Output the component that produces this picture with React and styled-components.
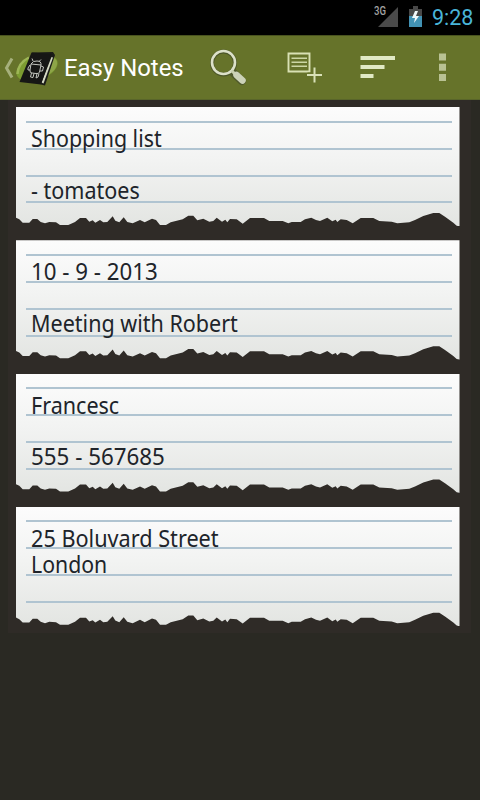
import React from 'react';
import styled, { createGlobalStyle } from 'styled-components';

const notes = [
  { id: 1, lines: [['Shopping list', 131], [], ['- tomatoes', 109]] },
  { id: 2, lines: [['10 - 9 - 2013', 127], [], ['Meeting with Robert', 207]] },
  { id: 3, lines: [['Francesc', 88], [], ['555 - 567685', 134]] },
  { id: 4, lines: [['25 Boluvard Street', 188], ['London', 76]] },
];

// torn bottom edge, left to right, in thirds of a pixel
const tear = [
  [0, 332], [10, 337], [20, 347], [40, 347], [50, 336], [64, 336], [74, 345],
  [87, 349], [100, 345], [120, 346], [132, 354], [157, 354], [177, 345],
  [192, 333], [210, 333], [220, 344], [230, 340], [238, 347], [252, 339],
  [262, 346], [274, 345], [290, 328], [298, 341], [310, 346], [323, 331],
  [334, 345], [350, 349], [372, 339], [386, 346], [408, 335], [420, 339],
  [432, 354], [450, 354], [464, 346], [500, 337], [517, 326], [532, 326],
  [544, 340], [562, 335], [580, 344], [592, 342], [602, 332], [618, 344],
  [628, 338], [634, 346], [642, 336], [662, 337], [680, 350], [702, 333],
  [744, 333], [760, 342], [800, 342], [817, 349], [827, 345], [854, 345],
  [867, 337], [886, 332], [900, 339], [912, 342], [934, 332], [949, 343],
  [959, 338], [964, 345], [974, 337], [992, 339], [1010, 349], [1034, 333],
  [1072, 333], [1090, 342], [1127, 344], [1144, 349], [1180, 346],
  [1197, 339], [1222, 327], [1252, 318], [1270, 318], [1287, 329],
  [1312, 347], [1322, 356], [1330, 358],
];

const tearPath = [
  '0 0',
  ...tear.map(([x, y]) => `${(x / 3).toFixed(1)}px ${(y / 3).toFixed(1)}px`),
  '100% 100%',
  '100% 0',
].join(', ');

function FittedText({ width, children }) {
  const ref = React.useRef(null);
  const [scale, setScale] = React.useState(1);

  React.useLayoutEffect(() => {
    setScale(width / ref.current.offsetWidth);
  }, [width, children]);

  return (
    <Fitted ref={ref} style={{ transform: `scaleX(${scale})` }}>
      {children}
    </Fitted>
  );
}

function StatusIcons() {
  return (
    <svg width="52" height="34" viewBox="0 0 52 34">
      <path d="M25 7V27H5Z" fill="#4a4a4a" />
      <path d="M40 6h5v3h4v7H36V9h4z" fill="#484848" />
      <path d="M36 16h13v11H36z" fill="#4292b4" />
      <path d="M42 11l-3 7h3l-1 5 5-7h-3l2-5z" fill="#f2f8fa" />
    </svg>
  );
}

function AppLogo() {
  return (
    <svg width="60" height="64" viewBox="0 1 60 64">
      <path d="M12 23.500L6.500 33L12 42.500" fill="none" stroke="#a6b07c" strokeWidth="3" />
      <ellipse cx="37" cy="33" rx="21.500" ry="12" transform="rotate(-20 37 33)" fill="#7c9c31" />
      <path d="M17.500 39Q18 28 29 22.500" fill="none" stroke="#9db656" strokeWidth="2.500" />
      <path d="M50 23q8 0 7 6-1 6-8 10z" fill="#8ea548" />
      <path d="M32 17.500L53 17 55 20 45 50.500 41 49.500z" fill="#1b1c18" />
      <path d="M51.500 22L53 22.500 43.500 48.500 41.500 47.500z" fill="#d5d9c5" />
      <path d="M31.500 17.500L51.500 19 41 49.500 19.500 47z" fill="#161615" />
      <g fill="none" stroke="#c3c5bf" strokeWidth="1" strokeLinejoin="round">
        <path d="M31 29Q33 25.500 37 26Q41.500 26 41 30L39.500 37Q39 39 36 38.500L32 38Q29.500 38 30 35z" />
        <path d="M31 29L41 30M33 26L32 23.500M39 26.500L41 24.500M30 30L28 33 28 35 30 35M41 31L43.500 32 42.500 36 40 36M31.500 38L30.500 42 33 42.500 34 38.500M37 38.500L36 43 38 42 39 38.500" />
      </g>
    </svg>
  );
}

function SearchIcon() {
  return (
    <svg width="40" height="40" viewBox="0 0 40 40">
      <circle cx="15.500" cy="15" r="11.500" fill="none" stroke="#4b5528" strokeWidth="4" />
      <path d="M25 24.500L34 33" stroke="#4f592c" strokeWidth="8" strokeLinecap="round" />
      <circle cx="15.500" cy="14.500" r="11.500" fill="none" stroke="#dce1c8" strokeWidth="2.600" />
      <path d="M23.500 22.500L27 26" stroke="#c9d0b0" strokeWidth="3" />
      <path d="M28.500 27L34.500 32.500" stroke="#ccd2b8" strokeWidth="6.500" strokeLinecap="round" />
    </svg>
  );
}

function AddNoteIcon() {
  return (
    <svg width="36" height="34" viewBox="0 1 36 34">
      <path d="M1.500 3.500h21v18h-21z" fill="none" stroke="#d9e1b4" strokeWidth="1.900" />
      <path d="M4.500 8.200h15.500M4.500 12.200h15.500M4.500 16.200h15.500" stroke="#ccd6a4" strokeWidth="1.600" />
      <path d="M27.500 16.500v15M20.500 25h14" stroke="#65732b" strokeWidth="5" />
      <path d="M27.500 17.500v15M20 25h15" stroke="#d9e1b8" strokeWidth="2" />
    </svg>
  );
}

function SortIcon() {
  return (
    <svg width="36" height="23" viewBox="0 0 36 23">
      <path d="M.5 0h34.500v4H.5zM.5 9h24v4H.5zM.5 18h13v4H.5z" fill="#e1e9c5" />
    </svg>
  );
}

function MoreIcon() {
  return (
    <svg width="8" height="29" viewBox="0 0 8 29">
      <path d="M0 .5h7v7h-7zM0 10.800h7v7h-7zM0 21h7v7h-7z" fill="#b9c293" />
    </svg>
  );
}

function NoteCard({ lines }) {
  return (
    <Paper>
      {lines.map(([text, width], i) => (
        <NoteLine key={i}>{text && <FittedText width={width}>{text}</FittedText>}</NoteLine>
      ))}
    </Paper>
  );
}

function App() {
  return (
    <Screen>
      <GlobalStyle />
      <StatusBar>
        <Network>
          <FittedText width={12}>3G</FittedText>
        </Network>
        <StatusIcons />
        <Clock>
          <FittedText width={41}>9:28</FittedText>
        </Clock>
      </StatusBar>
      <ActionBar>
        <AppLogo />
        <Title>
          <FittedText width={120}>Easy Notes</FittedText>
        </Title>
        <Action $left={23}><SearchIcon /></Action>
        <Action $left={39}><AddNoteIcon /></Action>
        <Action $left={37}><SortIcon /></Action>
        <Action $left={43}><MoreIcon /></Action>
      </ActionBar>
      <NoteList>
        {notes.map((note) => (
          <NoteCard key={note.id} lines={note.lines} />
        ))}
      </NoteList>
    </Screen>
  );
}

export default App;

const GlobalStyle = createGlobalStyle`
  body {
    margin: 0;
    background: #2a2923;
  }
`;

const Screen = styled.div`
  width: 480px;
  height: 800px;
  overflow: hidden;
  background: #2a2923;
`;

const Fitted = styled.span`
  display: inline-block;
  transform-origin: 0 50%;
  white-space: nowrap;
`;

const StatusBar = styled.div`
  display: flex;
  justify-content: flex-end;
  height: 35px;
  padding-right: 7px;
  background: #000;
  font-family: Roboto, sans-serif;
`;

const Network = styled.div`
  width: 13px;
  margin-right: -14px;
  padding-top: 5px;
  color: #a2a2a2;
  font-size: 12px;
  font-weight: 500;
  line-height: 13px;
`;

const Clock = styled.div`
  width: 41px;
  margin-left: 7px;
  color: #49b5d9;
  font-size: 22px;
  line-height: 35px;
`;

const ActionBar = styled.div`
  display: flex;
  align-items: center;
  box-sizing: border-box;
  height: 65px;
  background: #66732a;
  border-top: 1px solid #49531f;
  border-bottom: 1px solid #59652a;
`;

const Title = styled.div`
  width: 121px;
  margin-left: 4px;
  padding-top: 1px;
  color: #fff;
  font-family: Roboto, sans-serif;
  font-size: 23.500px;
  line-height: 62px;
`;

const Action = styled.div`
  display: flex;
  flex: none;
  margin-left: ${({ $left }) => $left}px;
`;

const NoteList = styled.div`
  display: flex;
  flex-direction: column;
  gap: 13.900px;
  box-sizing: border-box;
  width: 463px;
  height: 533px;
  margin-left: 8px;
  padding: 7px 8px 0;
  background: #2f2b27;
`;

const Paper = styled.div`
  flex: none;
  box-sizing: border-box;
  width: 443.500px;
  height: 119.400px;
  padding: 19px 15px 0;
  clip-path: polygon(${tearPath});
  background:
    linear-gradient(#b0c4d1, #b0c4d1) 10px 13.500px / 426px 2.400px no-repeat,
    linear-gradient(#b0c4d1, #b0c4d1) 10px 40.500px / 426px 2.400px no-repeat,
    linear-gradient(#b0c4d1, #b0c4d1) 10px 67.500px / 426px 2.400px no-repeat,
    linear-gradient(#b0c4d1, #b0c4d1) 10px 94.300px / 426px 2.400px no-repeat,
    linear-gradient(#fcfcfc, #f2f3f2 45%, #e3e5e2);
`;

const NoteLine = styled.div`
  height: 25.800px;
  color: #20242a;
  font-family: 'Noto Sans', sans-serif;
  font-size: 23.500px;
  line-height: 25.800px;
`;
